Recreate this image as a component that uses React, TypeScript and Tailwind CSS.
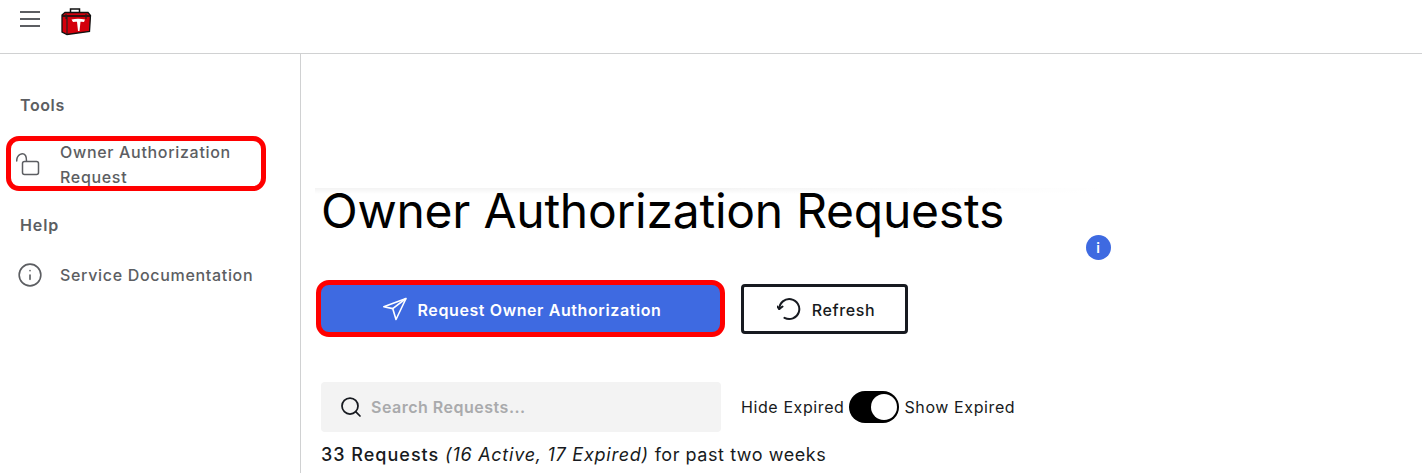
import { Search, Info } from "lucide-react";

function Logo() {
  return (
    <svg width="32" height="29" viewBox="0 0 32 29">
      <path d="M10.5 6 V2 H19.5 V6" fill="none" stroke="#111" strokeWidth="1.5" />
      <path d="M2 8 L5 5.5 H28 L30.5 8.5 L29.5 24.5 L7 27.5 L2 25 Z" fill="#d4000c" stroke="#111" strokeWidth="1.3" />
      <path d="M2 9 H30" stroke="#111" strokeWidth="1.6" />
      <path d="M7 10 V27 M6 7 V12 M26 7 V12" stroke="#222" strokeWidth="1.1" />
      <path d="M11.5 12.5 Q18 11 25 12.5 L24 15 Q22 14.5 20.5 14.8 L19.5 24 H18 L17 14.8 Q15 14.5 13 15 Z" fill="#fff" />
    </svg>
  );
}

function Unlock() {
  return (
    <svg width="24" height="24" viewBox="0 0 24 24" fill="none" stroke="#5c5e62" strokeWidth="1.5" strokeLinecap="round">
      <rect x="6.5" y="9.5" width="16" height="13" rx="2" />
      <path d="M0.7 9 C0.7 2 7 0 9.5 3.5 C10.5 5 10.5 7 10.5 9" />
    </svg>
  );
}

function Plane() {
  return (
    <svg width="24" height="24" viewBox="0 0 24 24" fill="none" stroke="#fff" strokeWidth="1.6" strokeLinejoin="round">
      <path d="M23 1.5 L0.8 9.7 L9.7 11.6 L13 22.5 Z" />
      <path d="M23 1.5 L9.7 11.6" />
    </svg>
  );
}

function Refresh() {
  return (
    <svg width="24" height="24" viewBox="0 0 24 24" fill="none" stroke="#171a20" strokeWidth="2" strokeLinecap="round" strokeLinejoin="round">
      <path d="M7.5 20.8 A10 10 0 1 0 2.3 12" />
      <path d="M0.2 9.5 L2.3 12 L5.5 9.5" />
    </svg>
  );
}

export default function App() {
  return (
    <div className="h-[473px] overflow-hidden bg-white font-['Inter',sans-serif] tracking-[0.6px]">
      <header className="flex h-[54px] border-b border-[#d0d1d2] pl-[20px]">
        <div className="mt-[11px] flex h-[16px] w-[20px] flex-col justify-between">
          <div className="h-[2px] bg-[#5c5e62]" />
          <div className="h-[2px] bg-[#5c5e62]" />
          <div className="h-[2px] bg-[#5c5e62]" />
        </div>
        <div className="mt-[7px] ml-[20px]">
          <Logo />
        </div>
      </header>
      <div className="flex h-[419px]">
        <aside className="w-[301px] shrink-0 border-r border-[#d0d1d2] pt-[41px] text-[#5c5e62]">
          <div className="pl-[20px] text-[16px] leading-[20px] font-semibold">Tools</div>
          <div className="mt-[21px] ml-[6px] flex h-[55px] w-[260px] items-center rounded-[13px] border-[5px] border-[#ff0000] pl-[5px] text-[16px] font-medium">
            <Unlock />
            <div className="mt-[2px] ml-[20px] leading-[25px] tracking-[0.68px]">
              Owner Authorization
              <br />
              Request
            </div>
          </div>
          <div className="mt-[24px] pl-[20px] text-[16px] leading-[20px] font-semibold tracking-[0.9px]">Help</div>
          <div className="mt-[27px] flex items-center pl-[17px] text-[16px] leading-[24px] font-medium tracking-[0.68px]">
            <Info size={26} strokeWidth={1.5} />
            <span className="ml-[17px]">Service Documentation</span>
          </div>
        </aside>
        <main className="relative grow pl-[20px]">
          <div className="absolute top-[134px] left-[14px] h-[6px] w-[790px] bg-gradient-to-b from-[#f3f3f3] to-white">
            <div className="h-full bg-gradient-to-r from-transparent via-transparent to-white" />
          </div>
          <h1 className="relative pt-[128px] text-[48px] leading-[58px] font-normal tracking-[-0.25px] text-black">
            Owner Authorization Requests
          </h1>
          <div className="relative">
            <div className="absolute top-[-5px] left-[765px] flex h-[25px] w-[25px] items-center justify-center rounded-full bg-[#3e6ae1] text-[14px] font-semibold text-white">
              i
            </div>
          </div>
          <div className="mt-[40px] flex items-center">
            <button className="-ml-[5px] flex h-[57px] w-[409px] items-center justify-center rounded-[13px] border-[5px] border-[#ff0000] bg-[#3e6ae1] pl-[3px] text-[16px] font-semibold tracking-[0.6px] text-white">
              <Plane />
              <span className="mt-[2px] ml-[11px]">Request Owner Authorization</span>
            </button>
            <button className="ml-[16px] flex h-[50px] w-[167px] items-center justify-center rounded-[4px] border-[3px] border-[#171a20] pl-[3px] text-[16px] font-medium text-[#171a20]">
              <Refresh />
              <span className="mt-[2px] ml-[11px]">Refresh</span>
            </button>
          </div>
          <div className="mt-[45px] flex items-center">
            <div className="flex h-[50px] w-[400px] items-center rounded-[4px] bg-[#f3f3f3] pl-[18px] text-[16px] font-semibold tracking-[0.5px] text-[#a9aaac]">
              <Search size={24} strokeWidth={1.75} className="text-[#171a20]" />
              <span className="ml-[8px]">Search Requests...</span>
            </div>
            <span className="ml-[20px] text-[16px] text-[#171a20]">Hide Expired</span>
            <div className="mr-[6px] ml-[4px] flex h-[32px] w-[50px] items-center justify-end rounded-full bg-black pr-[2px]">
              <div className="h-[26px] w-[26px] rounded-full bg-white" />
            </div>
            <span className="text-[16px] text-[#171a20]">Show Expired</span>
          </div>
          <p className="mt-[11px] text-[18px] leading-[24px] tracking-[0.75px] text-[#171a20]">
            <span className="font-medium tracking-[1px]">33 Requests</span> <em>(16 Active, 17 Expired)</em>{" "}
            <span className="tracking-[0.55px]">for past two weeks</span>
          </p>
        </main>
      </div>
    </div>
  );
}
